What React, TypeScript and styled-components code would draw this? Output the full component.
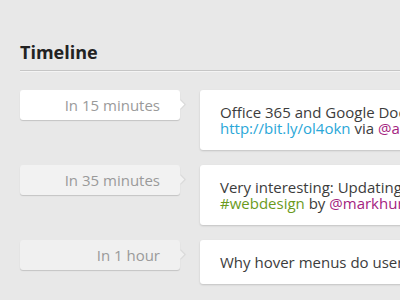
import styled, { createGlobalStyle } from 'styled-components';

const GlobalStyle = createGlobalStyle`
  html, body {
    margin: 0;
    padding: 0;
    background: #e8e8e8;
    overflow: hidden;
  }
  body {
    font-family: "Open Sans", "Liberation Sans", sans-serif;
  }
`;

const Page = styled.div`
  width: 400px;
  height: 300px;
  padding: 40px 0 0 20px;
  box-sizing: border-box;
  overflow: hidden;
`;

const Heading = styled.h2`
  margin: 0;
  font-size: 18px;
  font-weight: 700;
  line-height: 24px;
  color: #222;
  padding-bottom: 6px;
  border-bottom: 1px solid #c6c6c6;
  box-shadow: 0 1px 0 #f4f4f4;
`;

const List = styled.div`
  display: flex;
  flex-direction: column;
  gap: 15px;
  padding-top: 19px;
`;

const Row = styled.div`
  display: grid;
  grid-template-columns: 160px 300px;
  column-gap: 20px;
  align-items: start;
`;

const When = styled.div<{ $bg: string }>`
  position: relative;
  height: 30px;
  line-height: 30px;
  padding-right: 20px;
  text-align: right;
  font-size: 15px;
  color: #9a9a9a;
  background: ${(p) => p.$bg};
  border-radius: 3px;
  box-shadow: 0 1px 1px rgba(0, 0, 0, 0.16);

  &::after {
    content: '';
    position: absolute;
    right: -3px;
    top: 11px;
    width: 7px;
    height: 7px;
    background: ${(p) => p.$bg};
    transform: rotate(45deg);
    box-shadow: 1px -1px 1px rgba(0, 0, 0, 0.08);
  }
`;

const Card = styled.div`
  background: #fff;
  border-radius: 3px;
  box-shadow: 0 1px 2px rgba(0, 0, 0, 0.16);
  padding: 14px 20px;
  font-size: 15px;
  line-height: 16px;
  color: #3c3c3c;
  white-space: nowrap;
`;

const Link = styled.span`
  color: #2aa7d8;
`;

const Tag = styled.span`
  color: #6b9a1c;
`;

const Mention = styled.span`
  color: #a4237f;
`;

const items = [
  {
    when: 'In 15 minutes',
    bg: '#ffffff',
    body: (
      <>
        Office 365 and Google Docs compared
        <br />
        <Link>http://bit.ly/ol4okn</Link> via <Mention>@arstechnica</Mention>
      </>
    ),
  },
  {
    when: 'In 35 minutes',
    bg: '#f2f2f2',
    body: (
      <>
        Very interesting: Updating a site for mobile
        <br />
        <Tag>#webdesign</Tag> by <Mention>@markhurst</Mention>
      </>
    ),
  },
  {
    when: 'In 1 hour',
    bg: '#f0f0f0',
    body: <>Why hover menus do users a disservice</>,
  },
];

const App = () => (
  <>
    <GlobalStyle />
    <Page>
      <Heading>Timeline</Heading>
      <List>
        {items.map((item) => (
          <Row key={item.when}>
            <When $bg={item.bg}>{item.when}</When>
            <Card>{item.body}</Card>
          </Row>
        ))}
      </List>
    </Page>
  </>
);

export default App;
